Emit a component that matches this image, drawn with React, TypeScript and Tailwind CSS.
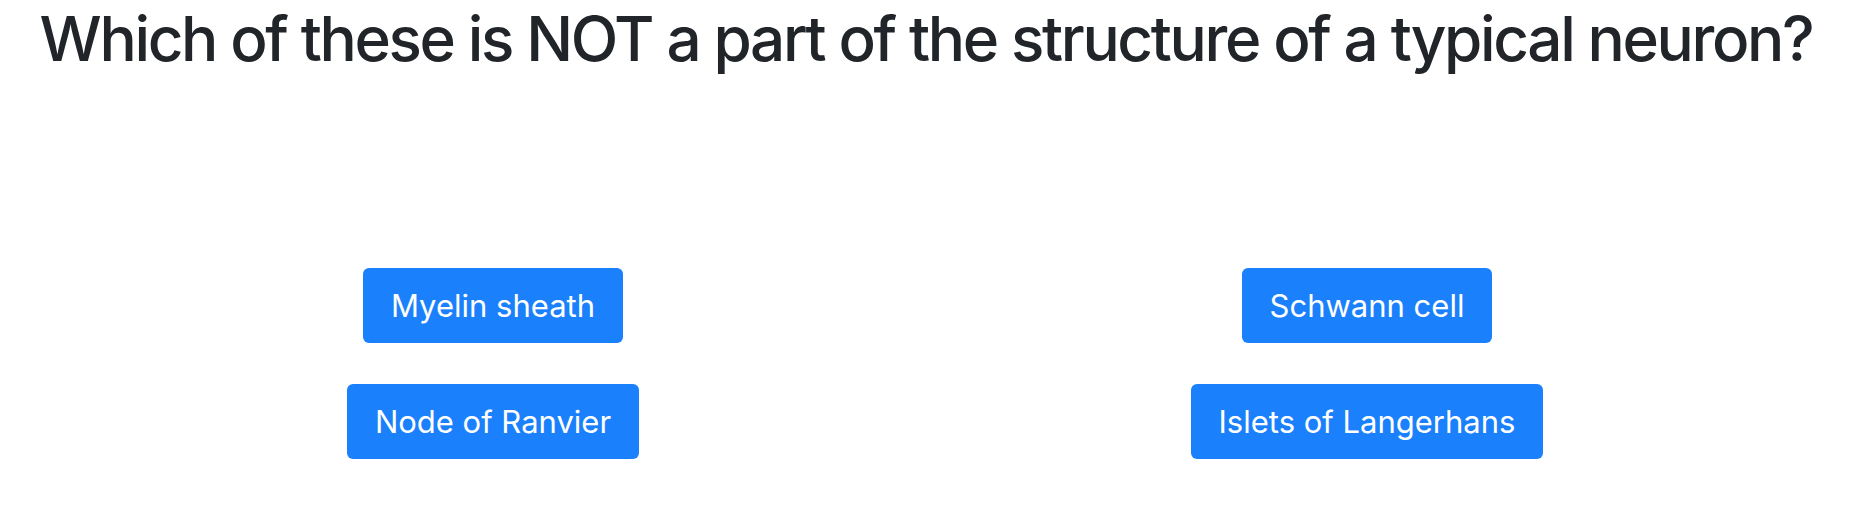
import React from "react";

const btn =
  "rounded-[6px] bg-[#1a80fc] px-[28px] py-[14px] text-[31px] leading-[47px] text-white font-normal";

export default function App() {
  return (
    <div className="min-h-[508px] w-[1852px] bg-white font-['Inter','Noto_Sans',sans-serif] text-[#212529]">
      <h1 className="pt-[2px] text-center text-[62px] leading-[1.2] font-medium whitespace-nowrap tracking-[-2.35px]">
        Which of these is NOT a part of the structure of a typical neuron?
      </h1>
      <div className="mt-[192px] ml-[56px] grid grid-cols-[874px_874px] gap-y-[41px]">
        <div className="flex justify-center">
          <button className={btn}>Myelin sheath</button>
        </div>
        <div className="flex justify-center">
          <button className={btn}>Schwann cell</button>
        </div>
        <div className="flex justify-center">
          <button className={btn}>Node of Ranvier</button>
        </div>
        <div className="flex justify-center">
          <button className={btn}>Islets of Langerhans</button>
        </div>
      </div>
    </div>
  );
}
